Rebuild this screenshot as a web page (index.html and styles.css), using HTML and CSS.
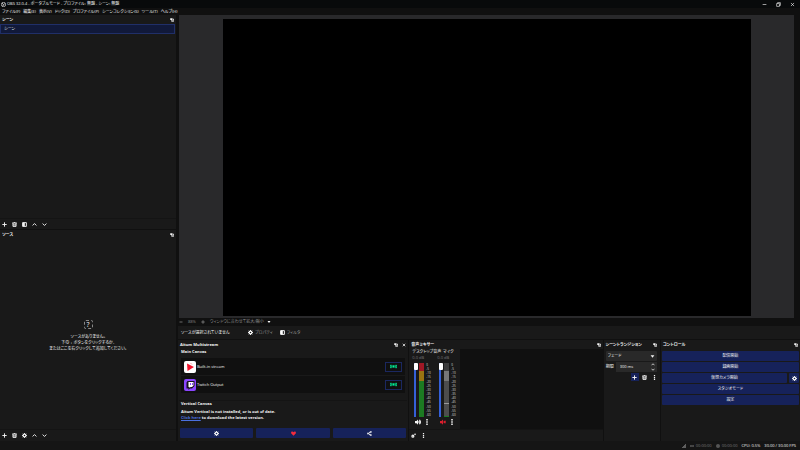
FILE: index.html
```
<!DOCTYPE html>
<html lang="ja">
  <head>
    <meta charset="UTF-8" />
    <meta name="viewport" content="width=device-width, initial-scale=1.0" />
    <title>OBS 32.0.4</title>
    <link rel="stylesheet" href="styles.css">
  </head>
  <body>
    <svg class="sprite" aria-hidden="true">
      <symbol id="plus" viewBox="0 0 16 16"><path d="M8 1v14M1 8h14" /></symbol>
      <symbol id="minus" viewBox="0 0 16 16"><path d="M2 8h12" /></symbol>
      <symbol id="up" viewBox="0 0 16 16"><path d="M2 11l6-6 6 6" /></symbol>
      <symbol id="down" viewBox="0 0 16 16"><path d="M2 5l6 6 6-6" /></symbol>
      <symbol id="close" viewBox="0 0 16 16"><path d="M3 3l10 10M13 3L3 13" /></symbol>
      <symbol id="restore" viewBox="0 0 16 16"><path d="M2 5h9v9H2zM5 5V2h9v9h-3" /></symbol>
      <symbol id="popout" viewBox="0 0 16 16"><path class="solid" d="M1 1h9v7H1zM9 9h6v6H9z" /><path d="M6 9v4h3M11 4h3v5" /></symbol>
      <symbol id="trash" viewBox="0 0 16 16"><path d="M1 3h14M3 3v11h10V3M6 1h4M6 6v6M10 6v6" /></symbol>
      <symbol id="filter" viewBox="0 0 16 16"><path d="M2 2h12v12H2z" /><path class="solid" d="M2 2h7v12H2z" /></symbol>
      <symbol id="gear" viewBox="0 0 16 16"><circle cx="8" cy="8" r="4.5" stroke-width="4" /><path d="M8 0v3M8 13v3M0 8h3M13 8h3M2.500 2.500l2 2M11.500 11.500l2 2M13.500 2.500l-2 2M4.500 11.500l-2 2" /></symbol>
      <symbol id="gears" viewBox="0 0 16 16"><circle cx="6" cy="10" r="3" stroke-width="4" /><circle cx="13" cy="4" r="1.500" /></symbol>
      <symbol id="dots" viewBox="0 0 16 16"><path class="solid" d="M6 0h4v4H6zM6 6h4v4H6zM6 12h4v4H6z" /></symbol>
      <symbol id="caret" viewBox="0 0 16 16"><path class="solid" d="M2 4h12l-6 8z" /></symbol>
      <symbol id="live" viewBox="0 0 24 16"><circle class="solid" cx="12" cy="8" r="4" /><path d="M7 3q-4 5 0 10M17 3q4 5 0 10M3 2q-4 6 0 12M21 2q4 6 0 12" /></symbol>
      <symbol id="heart" viewBox="0 0 16 16"><path class="solid" d="M8 15L1 8C-2 2 5-1 8 4c3-5 10-2 7 4z" /></symbol>
      <symbol id="share" viewBox="0 0 16 16"><circle cx="3" cy="8" r="2" /><circle cx="12" cy="3" r="2" /><circle cx="12" cy="13" r="2" /><path d="M5 7l5-3M5 9l5 3" /></symbol>
      <symbol id="speaker" viewBox="0 0 16 16"><path class="solid" d="M0 5h4l4-4v14l-4-4H0z" /><path d="M10 5q2 3 0 6M12 2q5 6 0 12" /></symbol>
      <symbol id="muted" viewBox="0 0 16 16"><path class="solid" d="M0 5h4l4-4v14l-4-4H0z" /><path d="M10 5l5 6M15 5l-5 6" /></symbol>
      <symbol id="signal" viewBox="0 0 16 16"><path class="solid" d="M0 12h3v4H0zM4 8h3v8H4zM8 4h3v12H8zM12 0h3v16h-3z" /></symbol>
      <symbol id="logo" viewBox="0 0 16 16"><circle cx="8" cy="8" r="7" /><path d="M8 8q-5-1-3-5M8 8q4-4 6 0M8 8q1 5-4 5" /></symbol>
    </svg>

    <header class="titlebar">
      <svg class="icon"><use href="#logo" /></svg>
      <span class="title">OBS 32.0.4 - ポータブルモード - プロファイル: 無題 - シーン: 無題</span>
      <div class="window-buttons">
        <button aria-label="最小化"><svg class="icon"><use href="#minus" /></svg></button>
        <button aria-label="元に戻す"><svg class="icon"><use href="#restore" /></svg></button>
        <button aria-label="閉じる"><svg class="icon"><use href="#close" /></svg></button>
      </div>
    </header>
    <nav class="menubar">
      <button>ファイル(F)</button>
      <button>編集(E)</button>
      <button>表示(V)</button>
      <button>ドック(D)</button>
      <button>プロファイル(P)</button>
      <button>シーンコレクション(S)</button>
      <button>ツール(T)</button>
      <button>ヘルプ(H)</button>
    </nav>

    <main class="workspace">
      <aside class="sidebar">
        <section class="dock scenes">
          <h2 class="dock-title">シーン <svg class="icon"><use href="#popout" /></svg></h2>
          <ul class="scene-list">
            <li class="selected">シーン</li>
          </ul>
          <div class="toolbar">
            <button aria-label="追加"><svg class="icon"><use href="#plus" /></svg></button>
            <button aria-label="削除"><svg class="icon"><use href="#trash" /></svg></button>
            <button aria-label="フィルタ"><svg class="icon"><use href="#filter" /></svg></button>
            <button aria-label="上へ"><svg class="icon"><use href="#up" /></svg></button>
            <button aria-label="下へ"><svg class="icon"><use href="#down" /></svg></button>
          </div>
        </section>
        <section class="dock sources">
          <h2 class="dock-title">ソース <svg class="icon"><use href="#popout" /></svg></h2>
          <div class="empty">
            <span class="empty-icon">?</span>
            <p>ソースがありません。<br>下の + ボタンをクリックするか、<br>またはここを右クリックして追加してください。</p>
          </div>
          <div class="toolbar">
            <button aria-label="追加"><svg class="icon"><use href="#plus" /></svg></button>
            <button aria-label="削除"><svg class="icon"><use href="#trash" /></svg></button>
            <button aria-label="プロパティ"><svg class="icon"><use href="#gear" /></svg></button>
            <button aria-label="上へ"><svg class="icon"><use href="#up" /></svg></button>
            <button aria-label="下へ"><svg class="icon"><use href="#down" /></svg></button>
          </div>
        </section>
      </aside>

      <div class="center">
        <div class="preview"><div class="canvas"></div></div>
        <div class="zoombar">
          <button aria-label="縮小"><svg class="icon"><use href="#minus" /></svg></button>
          <span class="zoom">88%</span>
          <button aria-label="拡大"><svg class="icon"><use href="#plus" /></svg></button>
          <button class="fit">ウィンドウに合わせて拡大/縮小 <svg class="icon"><use href="#caret" /></svg></button>
        </div>
        <div class="contextbar">
          <span class="context-label">ソースが選択されていません</span>
          <button><svg class="icon"><use href="#gear" /></svg> プロパティ</button>
          <button><svg class="icon"><use href="#filter" /></svg> フィルタ</button>
        </div>

        <div class="docks">
          <section class="dock multistream">
            <h2 class="dock-title">Aitum Multistream <svg class="icon"><use href="#popout" /></svg><svg class="icon"><use href="#close" /></svg></h2>
            <div class="group">
              <h3>Main Canvas</h3>
              <div class="output">
                <svg class="brand" viewBox="0 0 24 24"><rect width="24" height="24" rx="4" fill="#fff" /><path d="M6 5l14 7-13 8z" fill="#f3142d" /><path d="M13 4l3 3" stroke="#f99" stroke-width="2" /></svg>
                <span>Built-in stream</span>
                <button aria-label="配信"><svg class="icon"><use href="#live" /></svg></button>
              </div>
              <div class="output">
                <svg class="brand" viewBox="0 0 24 24"><rect width="24" height="24" rx="4" fill="#8b46ff" /><path d="M7 4h14v10l-5 5h-4l-3 3v-3H5V7z" fill="#171020" /><path d="M9 6h10v7l-3 3h-3l-2 2v-2H9z" fill="#fff" /><path d="M13 8v4M17 8v4" stroke="#8b46ff" stroke-width="2" /></svg>
                <span>Twitch Output</span>
                <button aria-label="配信"><svg class="icon"><use href="#live" /></svg></button>
              </div>
            </div>
            <div class="group vertical">
              <h3>Vertical Canvas</h3>
              <p>Aitum Vertical is not installed, or is out of date.<br><a href="#">Click here</a> to download the latest version.</p>
            </div>
            <div class="actions">
              <button aria-label="設定"><svg class="icon"><use href="#gear" /></svg></button>
              <button aria-label="支援" class="heart"><svg class="icon"><use href="#heart" /></svg></button>
              <button aria-label="共有"><svg class="icon"><use href="#share" /></svg></button>
            </div>
          </section>

          <section class="dock mixer">
            <h2 class="dock-title">音声ミキサー <svg class="icon"><use href="#popout" /></svg></h2>
            <div class="mixer-body">
              <div class="channels" id="channels"></div>
              <div class="mixer-space"></div>
            </div>
            <div class="toolbar">
              <button aria-label="詳細設定"><svg class="icon"><use href="#gears" /></svg></button>
              <button aria-label="メニュー"><svg class="icon"><use href="#dots" /></svg></button>
            </div>
          </section>

          <section class="dock transitions">
            <h2 class="dock-title">シーントランジション <svg class="icon"><use href="#popout" /></svg></h2>
            <div class="select-wrap">
              <select aria-label="トランジション"><option>フェード</option></select>
              <svg class="icon"><use href="#caret" /></svg>
            </div>
            <div class="duration">
              <label for="duration">期間</label>
              <div class="spin">
                <input id="duration" type="text" value="300 ms">
                <span class="arrows"><svg class="icon"><use href="#up" /></svg><svg class="icon"><use href="#down" /></svg></span>
              </div>
            </div>
            <div class="transition-tools">
              <button class="primary" aria-label="追加"><svg class="icon"><use href="#plus" /></svg></button>
              <button aria-label="削除"><svg class="icon"><use href="#trash" /></svg></button>
              <button aria-label="メニュー"><svg class="icon"><use href="#dots" /></svg></button>
            </div>
          </section>

          <section class="dock controls">
            <h2 class="dock-title">コントロール <svg class="icon"><use href="#popout" /></svg></h2>
            <button>配信開始</button>
            <button>録画開始</button>
            <div class="split">
              <button>仮想カメラ開始</button>
              <button aria-label="仮想カメラ設定"><svg class="icon"><use href="#gear" /></svg></button>
            </div>
            <button>スタジオモード</button>
            <button>設定</button>
          </section>
        </div>
      </div>
    </main>

    <footer class="statusbar">
      <span class="dim"><svg class="icon"><use href="#signal" /></svg></span>
      <span class="dim"><svg class="icon"><use href="#live" /></svg> 00:00:00</span>
      <span class="dim"><i class="rec"></i> 00:00:00</span>
      <span>CPU: 0.5%</span>
      <span>30.00 / 30.00 FPS</span>
    </footer>

    <script>
      const channels = [
        { name: "デスクトップ音声", muted: false },
        { name: "マイク", muted: true },
      ];

      let ticks = "";
      for (let db = 0; db >= -60; db -= 5) {
        ticks += `<span>${db}</span>`;
      }

      document.getElementById("channels").innerHTML = channels
        .map(
          (ch) => `
          <div class="channel ${ch.muted ? "muted" : ""}">
            <span class="name">${ch.name}</span>
            <span class="level">0.0 dB</span>
            <div class="meters">
              <input type="range" min="0" max="100" value="100" aria-label="${ch.name}">
              <div class="meter"></div>
              <div class="ticks">${ticks}</div>
            </div>
            <div class="channel-buttons">
              <button aria-label="ミュート"><svg class="icon"><use href="#${ch.muted ? "muted" : "speaker"}" /></svg></button>
              <button aria-label="メニュー"><svg class="icon"><use href="#dots" /></svg></button>
            </div>
          </div>`
        )
        .join("");
    </script>
  </body>
</html>
```
FILE: styles.css
```
* {
  box-sizing: border-box;
}

body {
  margin: 0;
  min-height: 100vh;
  display: flex;
  flex-direction: column;
  background-color: #101010;
  color: #f4f4f4;
  font-family: "Open Sans", "Noto Sans CJK JP", sans-serif;
  font-size: 4px;
  line-height: 6px;
  font-feature-settings: "palt";
}

h2,
h3,
p,
ul {
  margin: 0;
  padding: 0;
  font-size: 4px;
}

button,
input,
select {
  margin: 0;
  padding: 0;
  border: none;
  background: none;
  color: inherit;
  font: inherit;
  font-feature-settings: inherit;
}

button {
  display: flex;
  align-items: center;
  justify-content: center;
  white-space: nowrap;
  cursor: pointer;
}

.sprite {
  display: none;
}

.icon {
  width: 5px;
  height: 5px;
  flex: none;
  fill: none;
  stroke: currentColor;
  stroke-width: 3;
}

.solid {
  fill: currentColor;
  stroke: none;
}

/* title and menu */
.titlebar {
  display: flex;
  align-items: center;
  gap: 1px;
  height: 8px;
  padding: 0 5px 0 1px;
  background-color: #080a0b;
}

.window-buttons {
  display: flex;
  gap: 9px;
  margin-left: auto;
}

.titlebar .icon {
  stroke-width: 2;
}

.menubar {
  display: flex;
  gap: 3px;
  height: 7px;
  padding-left: 2px;
}

/* docks */
.workspace {
  flex: 1;
  display: grid;
  grid-template-columns: 22% 1fr;
  gap: 2px;
}

.sidebar {
  display: flex;
  flex-direction: column;
  gap: 1px;
}

.scenes {
  flex: 51;
}

.sources {
  flex: 50;
}

.dock {
  display: flex;
  flex-direction: column;
  min-width: 0;
  background-color: #191919;
}

.dock-title {
  display: flex;
  align-items: center;
  gap: 4px;
  height: 9px;
  padding: 0 2px;
  white-space: nowrap;
}

.dock-title .icon {
  width: 4px;
  height: 4px;
}

.dock-title .icon:first-of-type {
  margin-left: auto;
}

.scene-list {
  flex: 1;
  padding-right: 1px;
  list-style: none;
}

.scene-list li {
  height: 10px;
  padding: 1px 3px;
  border: 1px solid #202f68;
  background-color: #11193a;
}

.toolbar {
  display: flex;
  align-items: center;
  gap: 5px;
  height: 11px;
  padding: 0 2px;
  border-top: 1px solid #141414;
}

.sources,
.mixer {
  padding-bottom: 1px;
}

.empty {
  flex: 1;
  display: flex;
  flex-direction: column;
  align-items: center;
  justify-content: center;
  gap: 5px;
  padding-top: 3px;
  text-align: center;
}

.empty-icon {
  width: 9px;
  height: 9px;
  border: 1px dashed #888;
  border-radius: 2px;
  font-size: 7px;
  line-height: 7px;
}

/* preview */
.center {
  display: flex;
  flex-direction: column;
  min-width: 0;
}

.preview {
  flex: 1;
  display: flex;
  justify-content: center;
  margin: 0 6px 0 1px;
  padding: 4px 0 2px;
  background-color: #29292b;
}

.canvas {
  aspect-ratio: 16 / 9;
  background-color: #000;
}

.zoombar {
  display: flex;
  align-items: center;
  gap: 5px;
  height: 8px;
  padding-left: 1px;
  color: #888;
}

.zoombar .icon {
  width: 4px;
  height: 4px;
}

.fit {
  gap: 3px;
}

.fit .icon {
  color: #fff;
}

.contextbar {
  display: flex;
  align-items: center;
  gap: 1px;
  height: 13px;
  margin-bottom: 1px;
  padding-left: 3px;
  background-color: #191919;
}

.context-label {
  width: 63px;
}

.contextbar button {
  gap: 2px;
  padding: 0 3px;
  height: 8px;
  color: #999;
}

.contextbar .icon {
  color: #fff;
}

.docks {
  display: grid;
  grid-template-columns: 230fr 193fr 56fr 139fr;
  gap: 1px;
  height: 101px;
}

/* multistream */
.group {
  margin: 0 1px;
  padding: 0 2px;
}

.group h3 {
  height: 9px;
}

.output {
  display: flex;
  align-items: center;
  gap: 1px;
  height: 18px;
  padding: 0 3px;
  border-bottom: 1px solid #191919;
  background-color: #101010;
}

.output button {
  width: 17px;
  height: 10px;
  margin-left: auto;
  border: 1px solid #1b2860;
  color: #00f59a;
}

.output .icon {
  width: 7px;
}

.brand {
  width: 12px;
  height: 12px;
}

.vertical {
  margin-top: 6px;
  border-top: 1px solid #141414;
  font-weight: bold;
}

.vertical h3 {
  height: 8px;
}

.vertical a {
  color: #4b70df;
}

.actions {
  display: grid;
  grid-template-columns: repeat(3, 1fr);
  gap: 3px;
  margin: auto 2px 3px;
}

.actions button {
  height: 10px;
  border-radius: 1px;
  background-color: #16225a;
}

.actions .heart {
  color: #f52c3c;
}

/* mixer */
.mixer-body {
  flex: 1;
  display: flex;
}

.channels {
  display: flex;
  width: 51px;
}

.mixer-space {
  flex: 1;
  background-color: #101010;
}

.channel {
  display: flex;
  flex-direction: column;
  width: 25px;
  padding-left: 3px;
}

.name {
  white-space: nowrap;
  text-align: center;
}

.level {
  color: #777;
}

.meters {
  display: flex;
  gap: 2px;
  padding: 2px 0 1px 1px;
}

.meters input {
  appearance: none;
  writing-mode: vertical-lr;
  direction: rtl;
  width: 4px;
  height: 54px;
}

.meters input::-webkit-slider-runnable-track {
  width: 2px;
  height: 100%;
  background-color: #3560d8;
}

.meters input::-webkit-slider-thumb {
  appearance: none;
  width: 4px;
  height: 7px;
  margin-right: -1px;
  border-radius: 1px;
  background-color: #fff;
}

.meter {
  width: 5px;
  background: linear-gradient(#a01826 0 15%, #9a7412 15% 33%, #1c7a22 33%);
}

.muted .meter {
  background: linear-gradient(#3c3c3c 0 15%, #777 15% 33%, #4d4d4d 33% 74%, #999 74% 76%, #4d4d4d 76% 98%, #1c7a22 98%);
}

.ticks {
  display: flex;
  flex-direction: column;
  justify-content: space-between;
  color: #ddd;
  font-size: 3px;
  line-height: 4px;
}

.channel-buttons {
  display: flex;
  gap: 3px;
  height: 8px;
  padding-left: 3px;
}

.channel-buttons .icon {
  width: 6px;
  height: 6px;
}

.muted .channel-buttons button:first-child {
  color: #d91e2d;
}

/* transitions */
.transitions {
  padding-right: 1px;
}

.select-wrap {
  display: flex;
  align-items: center;
  height: 10px;
  margin: 2px 2px 1px;
  padding: 0 2px;
  border-radius: 1px;
  background-color: #292929;
}

.select-wrap select {
  appearance: none;
  flex: 1;
  min-width: 0;
}

.duration {
  display: flex;
  align-items: center;
  gap: 2px;
  padding: 0 2px;
}

.duration label {
  white-space: nowrap;
}

.spin {
  flex: 1;
  display: flex;
  align-items: center;
  height: 10px;
  padding: 0 2px 0 4px;
  background-color: #292929;
}

.spin input {
  flex: 1;
  width: 0;
  min-width: 0;
}

.arrows {
  display: flex;
  flex-direction: column;
}

.arrows .icon {
  width: 4px;
  height: 5px;
}

.transition-tools {
  display: flex;
  justify-content: flex-end;
  gap: 2px;
  margin-top: 1px;
}

.transition-tools button {
  width: 8px;
  height: 8px;
}

.transition-tools .primary {
  background-color: #16225a;
}

/* controls */
.controls > button,
.split button {
  height: 10px;
  margin: 0 1px 1px;
  border-radius: 1px;
  background-color: #16225a;
}

.controls > .dock-title {
  margin-bottom: 2px;
}

.split {
  display: grid;
  grid-template-columns: 1fr 12px;
}

.statusbar {
  display: flex;
  align-items: center;
  justify-content: flex-end;
  gap: 4px;
  height: 9px;
  padding-right: 4px;
  background-color: #151515;
}

.statusbar span {
  display: flex;
  align-items: center;
  gap: 2px;
}

.statusbar .dim {
  color: #777;
}

.dim .icon {
  width: 4px;
  height: 4px;
}

.rec {
  width: 4px;
  height: 4px;
  border-radius: 50%;
  background-color: #555;
}
```
